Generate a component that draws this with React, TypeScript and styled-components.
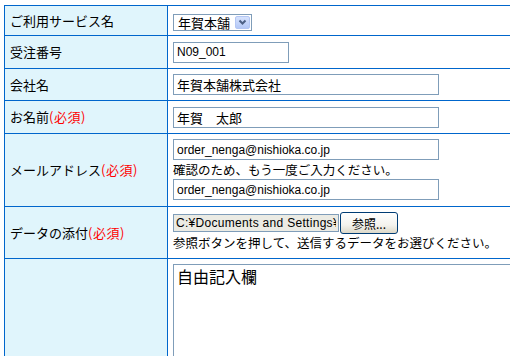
import React from "react";
import styled, { createGlobalStyle } from "styled-components";

const Global = createGlobalStyle`
  html, body { margin: 0; padding: 0; background: #ffffff; overflow: hidden; }
  body { font-family: "Noto Sans CJK JP", "Liberation Sans", sans-serif; color: #000; }
`;

const Form = styled.div`
  margin: 5px 0 0 4px;
  width: 640px;
  display: grid;
  grid-template-columns: 162px 1fr;
  grid-template-rows: 29px 32px 31px 32px 72px 51px 120px;
  gap: 1px;
  padding: 1px 0 0 1px;
  background: #0066cc;
`;

const Label = styled.div`
  background: #e0f5fc;
  display: flex;
  align-items: center;
  padding-left: 5px;
  font-size: 13px;
  line-height: 16px;
  white-space: nowrap;
`;

const Required = styled.span`
  color: #ff0000;
  letter-spacing: 0.5px;
`;

const Value = styled.div<{ $top?: boolean }>`
  background: #ffffff;
  display: flex;
  flex-direction: column;
  justify-content: ${(p) => (p.$top ? "flex-start" : "center")};
  align-items: flex-start;
  padding: ${(p) => (p.$top ? "5px 0 0 5px" : "0 0 0 5px")};
  min-width: 0;
`;

const TextInput = styled.input<{ $w: number; $cjk?: boolean }>`
  box-sizing: border-box;
  width: ${(p) => p.$w}px;
  height: 21px;
  margin: 0;
  border: 1px solid #7f9db9;
  padding: 0 3px;
  font-family: "Liberation Sans", "Noto Sans CJK JP", sans-serif;
  font-size: ${(p) => (p.$cjk ? "13px" : "12px")};
  color: #000;
  background: #fff;
  outline: none;
`;

const Hint = styled.div<{ $h: number }>`
  font-size: 12.5px;
  line-height: ${(p) => p.$h}px;
  white-space: nowrap;
`;

const SelectBox = styled.div`
  box-sizing: border-box;
  margin-top: 3px;
  width: 79px;
  height: 17px;
  border: 1px solid #7f9db9;
  display: flex;
  align-items: center;
  justify-content: space-between;
  padding: 0 1px 0 4px;
  font-size: 13px;
  line-height: 15px;
  background: #fff;
`;

const ArrowBtn = styled.div`
  box-sizing: border-box;
  width: 15px;
  height: 13px;
  border: 1px solid #b3c6f4;
  border-radius: 2px;
  background: linear-gradient(#d6e2fd, #b4c8f6);
  display: flex;
  align-items: center;
  justify-content: center;
`;

const FileRow = styled.div`
  display: flex;
  align-items: center;
`;

const FileInput = styled.input`
  box-sizing: border-box;
  width: 166px;
  height: 18px;
  margin: 0;
  border: 1px solid #7f9db9;
  padding: 0 2px;
  background: #ebebe4;
  font-family: "Liberation Sans", "Noto Sans CJK JP", sans-serif;
  font-size: 12px;
  letter-spacing: 0.3px;
  color: #000;
  outline: none;
`;

const Button = styled.button`
  box-sizing: border-box;
  width: 58px;
  height: 22px;
  margin: 0 0 0 1px;
  border: 1px solid #003c74;
  border-radius: 3px;
  background: linear-gradient(#ffffff 0%, #f4f3ee 60%, #dcd8c8 100%);
  font-family: "Noto Sans CJK JP", "Liberation Sans", sans-serif;
  font-size: 12px;
  padding: 0;
  color: #000;
`;

const Memo = styled.textarea`
  box-sizing: border-box;
  margin: 0;
  width: 420px;
  height: 140px;
  border: 1px solid #7f9db9;
  padding: 1px 3px;
  font-family: "Noto Sans CJK JP", sans-serif;
  font-size: 16px;
  line-height: 20px;
  resize: none;
  outline: none;
  color: #000;
`;

const Chevron = () => (
  <svg width="9" height="7" viewBox="0 0 9 7">
    <path d="M1.5 1.5 L4.5 4.5 L7.5 1.5" fill="none" stroke="#4d6185" strokeWidth="2" />
  </svg>
);

export default function App() {
  return (
    <>
      <Global />
      <Form>
        <Label>ご利用サービス名</Label>
        <Value $top>
          <SelectBox>
            <span>年賀本舗</span>
            <ArrowBtn>
              <Chevron />
            </ArrowBtn>
          </SelectBox>
        </Value>

        <Label>受注番号</Label>
        <Value>
          <TextInput $w={116} defaultValue="N09_001" readOnly />
        </Value>

        <Label>会社名</Label>
        <Value>
          <TextInput $w={266} $cjk defaultValue="年賀本舗株式会社" readOnly />
        </Value>

        <Label>
          お名前<Required>(必須)</Required>
        </Label>
        <Value>
          <TextInput $w={266} $cjk defaultValue="年賀　太郎" readOnly />
        </Value>

        <Label>
          メールアドレス<Required>(必須)</Required>
        </Label>
        <Value $top>
          <TextInput $w={266} defaultValue="order_nenga@nishioka.co.jp" readOnly />
          <Hint $h={19}>確認のため、もう一度ご入力ください。</Hint>
          <TextInput $w={266} defaultValue="order_nenga@nishioka.co.jp" readOnly />
        </Value>

        <Label>
          データの添付<Required>(必須)</Required>
        </Label>
        <Value $top>
          <FileRow>
            <FileInput defaultValue="C:¥Documents and Settings¥" readOnly />
            <Button type="button">参照...</Button>
          </FileRow>
          <Hint $h={18}>参照ボタンを押して、送信するデータをお選びください。</Hint>
        </Value>

        <Label />
        <Value $top>
          <Memo defaultValue="自由記入欄" readOnly />
        </Value>
      </Form>
    </>
  );
}
